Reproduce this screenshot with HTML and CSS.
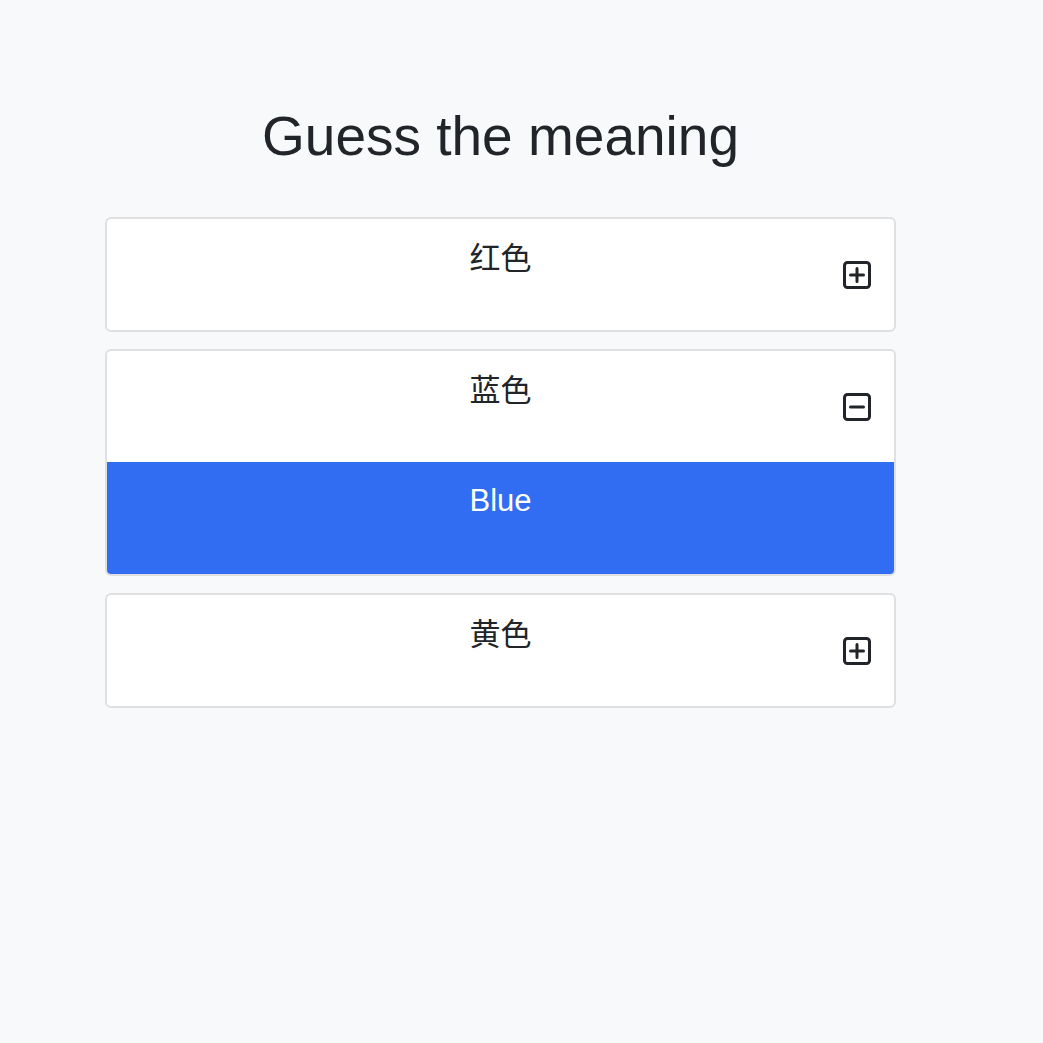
FILE: index.html
```html
<!DOCTYPE html>
<html lang="en">
<head>
<meta charset="utf-8">
<title>Guess the meaning</title>
<link rel="stylesheet" href="styles.css">
</head>
<body>
<main class="page">
  <h1 class="title">Guess the meaning</h1>
  <div class="cards">
    <section class="card">
      <div class="card-head">
        <span class="spacer"></span>
        <h3 class="word">红色</h3>
        <svg class="toggle" viewBox="0 0 28 28" aria-hidden="true"><rect x="1.5" y="1.5" width="25" height="25" rx="3"/><path d="M14 7.5v13M7.5 14h13"/></svg>
      </div>
    </section>
    <section class="card">
      <div class="card-head">
        <span class="spacer"></span>
        <h3 class="word">蓝色</h3>
        <svg class="toggle" viewBox="0 0 28 28" aria-hidden="true"><rect x="1.5" y="1.5" width="25" height="25" rx="3"/><path d="M7.5 14h13"/></svg>
      </div>
      <div class="card-body">Blue</div>
    </section>
    <section class="card">
      <div class="card-head">
        <span class="spacer"></span>
        <h3 class="word">黄色</h3>
        <svg class="toggle" viewBox="0 0 28 28" aria-hidden="true"><rect x="1.5" y="1.5" width="25" height="25" rx="3"/><path d="M14 7.5v13M7.5 14h13"/></svg>
      </div>
    </section>
  </div>
</main>
</body>
</html>
```
FILE: styles.css
```css
html, body {
  margin: 0;
  padding: 0;
  background: #f8f9fa;
  color: #212529;
  font-family: "Liberation Sans", "Noto Sans CJK SC", Arial, sans-serif;
}

.page {
  width: 791px;
  margin-left: 105px;
  padding-top: 103px;
}

.title {
  margin: 0 0 48px;
  font-size: 55px;
  line-height: 66px;
  font-weight: 400;
  text-align: center;
}

.cards {
  display: flex;
  flex-direction: column;
  gap: 17px;
}

.card {
  background: #fff;
  border: 2px solid #dfe0e2;
  border-radius: 6px;
  overflow: hidden;
}

.card-head {
  display: grid;
  grid-template-columns: 28px 1fr 28px;
  align-items: center;
  height: 111px;
  padding: 0 23px;
  box-sizing: border-box;
}

.word {
  align-self: start;
  margin: 20px 0 0;
  font-family: "Noto Sans CJK SC", "Liberation Sans", sans-serif;
  font-size: 31px;
  line-height: 34px;
  font-weight: 400;
  text-align: center;
}

.toggle {
  width: 28px;
  height: 28px;
  fill: none;
  stroke: #212529;
  stroke-width: 3;
  stroke-linecap: round;
}

.card-body {
  height: 112px;
  box-sizing: border-box;
  padding-top: 20px;
  background: #316df3;
  color: #fff;
  font-size: 31px;
  line-height: 37px;
  text-align: center;
}
```
